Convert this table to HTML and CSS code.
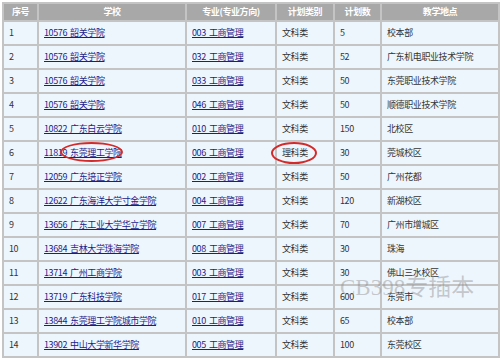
FILE: index.html
```html
<!DOCTYPE html>
<html>
<head>
<meta charset="utf-8">
<link rel="stylesheet" href="styles.css">
</head>
<body>
<div class="wrap">
<table class="plan">
<colgroup>
<col class="c1"><col class="c2"><col class="c3"><col class="c4"><col class="c5"><col class="c6">
</colgroup>
<thead>
<tr><th>序号</th><th>学校</th><th>专业(专业方向)</th><th>计划类别</th><th>计划数</th><th>教学地点</th></tr>
</thead>
<tbody>
<tr><td>1</td><td><a>10576 韶关学院</a></td><td><a>003 工商管理</a></td><td>文科类</td><td>5</td><td>校本部</td></tr>
<tr><td>2</td><td><a>10576 韶关学院</a></td><td><a>032 工商管理</a></td><td>文科类</td><td>52</td><td>广东机电职业技术学院</td></tr>
<tr><td>3</td><td><a>10576 韶关学院</a></td><td><a>033 工商管理</a></td><td>文科类</td><td>50</td><td>东莞职业技术学院</td></tr>
<tr><td>4</td><td><a>10576 韶关学院</a></td><td><a>046 工商管理</a></td><td>文科类</td><td>50</td><td>顺德职业技术学院</td></tr>
<tr><td>5</td><td><a>10822 广东白云学院</a></td><td><a>010 工商管理</a></td><td>文科类</td><td>150</td><td>北校区</td></tr>
<tr><td>6</td><td><a>11819 东莞理工学院</a></td><td><a>006 工商管理</a></td><td>理科类</td><td>30</td><td>莞城校区</td></tr>
<tr><td>7</td><td><a>12059 广东培正学院</a></td><td><a>002 工商管理</a></td><td>文科类</td><td>50</td><td>广州花都</td></tr>
<tr><td>8</td><td><a>12622 广东海洋大学寸金学院</a></td><td><a>004 工商管理</a></td><td>文科类</td><td>120</td><td>新湖校区</td></tr>
<tr><td>9</td><td><a>13656 广东工业大学华立学院</a></td><td><a>007 工商管理</a></td><td>文科类</td><td>70</td><td>广州市增城区</td></tr>
<tr><td>10</td><td><a>13684 吉林大学珠海学院</a></td><td><a>008 工商管理</a></td><td>文科类</td><td>30</td><td>珠海</td></tr>
<tr><td>11</td><td><a>13714 广州工商学院</a></td><td><a>003 工商管理</a></td><td>文科类</td><td>30</td><td>佛山三水校区</td></tr>
<tr><td>12</td><td><a>13719 广东科技学院</a></td><td><a>017 工商管理</a></td><td>文科类</td><td>600</td><td>东莞市</td></tr>
<tr><td>13</td><td><a>13844 东莞理工学院城市学院</a></td><td><a>010 工商管理</a></td><td>文科类</td><td>65</td><td>校本部</td></tr>
<tr><td>14</td><td><a>13902 中山大学新华学院</a></td><td><a>005 工商管理</a></td><td>文科类</td><td>100</td><td>东莞校区</td></tr>
</tbody>
</table>
<div class="mark mark-school"></div>
<div class="mark mark-type"></div>
<div class="watermark">CB398专插本</div>
</div>
</body>
</html>
```
FILE: styles.css
```css
html, body {
  margin: 0;
  padding: 0;
  background: #ffffff;
}
body {
  padding: 2px;
  font-family: "Noto Sans CJK SC", "Noto Sans", sans-serif;
  font-size: 9px;
  letter-spacing: -0.4px;
  word-spacing: 1.5px;
  color: #333333;
}
.wrap {
  position: relative;
  width: 496px;
}
.plan {
  width: 496px;
  table-layout: fixed;
  border-collapse: collapse;
  background: #eef6fd;
}
.c1 { width: 35px; }
.c2 { width: 148px; }
.c3 { width: 90px; }
.c4 { width: 58px; }
.c5 { width: 47px; }
.c6 { width: 118px; }
.plan th, .plan td {
  border: 2px solid #c4c4c4;
  padding: 0 0 0 5px;
  white-space: nowrap;
  overflow: hidden;
  line-height: 12px;
}
.plan thead tr {
  height: 18px;
}
.plan tbody tr {
  height: 24px;
}
.plan th {
  background: #a8a8a8;
  color: #ffffff;
  font-weight: bold;
  text-align: center;
  padding: 0;
}
.plan td {
  text-align: left;
}
.plan a {
  color: #1c1c8a;
  text-decoration: underline;
}
.mark {
  position: absolute;
  border: 2px solid #d42a2a;
  border-radius: 50%;
  box-sizing: border-box;
}
.mark-school {
  left: 58px;
  top: 140px;
  width: 63px;
  height: 20px;
}
.mark-type {
  left: 269px;
  top: 140px;
  width: 46px;
  height: 22px;
}
.watermark {
  position: absolute;
  left: 338px;
  top: 266px;
  font-family: "Liberation Serif", "Noto Sans CJK SC", serif;
  font-size: 23px;
  letter-spacing: 0;
  word-spacing: 0;
  color: rgba(140, 140, 140, 0.45);
  white-space: nowrap;
}
```
